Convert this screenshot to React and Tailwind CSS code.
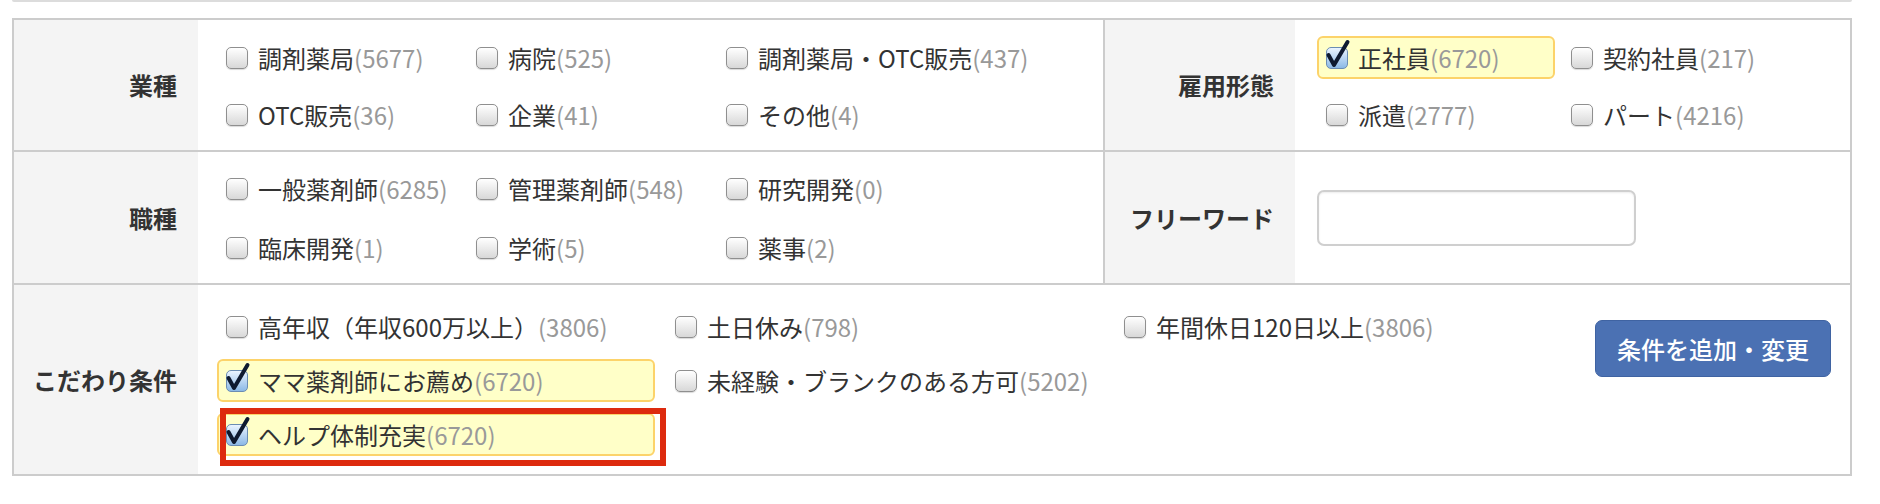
import React from 'react';

const font = { fontFamily: '"Noto Sans CJK JP", "Noto Sans", sans-serif' };

const Box = ({ on }) =>
  on ? (
    <span className="relative w-[22px] h-[22px] shrink-0 rounded-[5px] border border-[#6b8db3] bg-linear-to-b from-[#eaf4ff] to-[#8cb9e6]">
      <svg className="absolute left-[-1px] top-[-9px] overflow-visible" width="26" height="30" viewBox="0 0 26 30">
        <path d="M2.5 16 L8 26 L21.5 3" stroke="#0e1a30" strokeWidth="4" fill="none" strokeLinecap="round" strokeLinejoin="round" />
      </svg>
    </span>
  ) : (
    <span className="w-[22px] h-[22px] shrink-0 rounded-[5px] border border-[#8f8f8f] bg-linear-to-b from-white to-[#d8d8d8] shadow-[0_1px_1px_rgba(0,0,0,0.15)]" />
  );

const Item = ({ label, count, on }) => (
  <label
    className={`flex items-center h-[43px] px-[7px] border-2 rounded-[6px] ${
      on ? 'bg-[#ffffc8] border-[#fcd36a]' : 'border-transparent'
    }`}
  >
    <Box on={on} />
    <span className="ml-[10px] text-[24px] leading-none text-[#333] whitespace-nowrap">
      {label}
      <span className="text-[#999]">({count})</span>
    </span>
  </label>
);

const Head = ({ children, w }) => (
  <div className={`${w} shrink-0 bg-[#f4f4f4] flex items-center justify-end pr-[21px] text-[24px] font-bold text-[#333]`}>
    {children}
  </div>
);

const gyoshu = [
  ['調剤薬局', 5677], ['病院', 525], ['調剤薬局・OTC販売', 437],
  ['OTC販売', 36], ['企業', 41], ['その他', 4],
];
const koyo = [
  ['正社員', 6720, true], ['契約社員', 217], ['派遣', 2777], ['パート', 4216],
];
const shokushu = [
  ['一般薬剤師', 6285], ['管理薬剤師', 548], ['研究開発', 0],
  ['臨床開発', 1], ['学術', 5], ['薬事', 2],
];

export default function App() {
  return (
    <div className="w-[1880px] h-[504px] bg-white" style={font}>
      <div className="ml-[12px] mr-[28px] h-[2px] bg-[#dcdcdc] rounded-b-[3px]" />

      <div className="ml-[12px] mr-[28px] mt-[16px] border-2 border-[#ccc]">
        {/* 業種 / 雇用形態 */}
        <div className="flex border-b-2 border-[#ccc]">
          <div className="flex w-[1091px] border-r-2 border-[#ccc]">
            <Head w="w-[184px]">業種</Head>
            <div className="pl-[19px] pt-[16px] pb-[14px] grid grid-cols-[repeat(3,238px)] gap-x-[12px] gap-y-[14px]">
              {gyoshu.map(([l, c]) => <Item key={l} label={l} count={c} />)}
            </div>
          </div>
          <div className="flex flex-1">
            <Head w="w-[190px]">雇用形態</Head>
            <div className="pl-[22px] pt-[16px] pb-[14px] grid grid-cols-[repeat(2,238px)] gap-x-[7px] gap-y-[14px]">
              {koyo.map(([l, c, on]) => <Item key={l} label={l} count={c} on={on} />)}
            </div>
          </div>
        </div>

        {/* 職種 / フリーワード */}
        <div className="flex border-b-2 border-[#ccc]">
          <div className="flex w-[1091px] border-r-2 border-[#ccc]">
            <Head w="w-[184px]">職種</Head>
            <div className="pl-[19px] pt-[15px] pb-[14px] grid grid-cols-[repeat(3,238px)] gap-x-[12px] gap-y-[16px]">
              {shokushu.map(([l, c]) => <Item key={l} label={l} count={c} />)}
            </div>
          </div>
          <div className="flex flex-1">
            <Head w="w-[190px]">フリーワード</Head>
            <div className="pl-[22px] flex items-center">
              <input
                type="text"
                className="w-[319px] h-[56px] rounded-[7px] border-2 border-[#cfcfcf] bg-white shadow-[inset_0_1px_2px_rgba(0,0,0,0.08)] outline-none"
              />
            </div>
          </div>
        </div>

        {/* こだわり条件 */}
        <div className="flex">
          <Head w="w-[184px]">こだわり条件</Head>
          <div className="flex-1 flex">
            <div className="pl-[19px] pt-[20px] pb-[18px] grid grid-cols-[repeat(3,438px)] gap-x-[11px] gap-y-[11px]">
              <Item label="高年収（年収600万以上）" count={3806} />
              <Item label="土日休み" count={798} />
              <Item label="年間休日120日以上" count={3806} />
              <Item label="ママ薬剤師にお薦め" count={6720} on />
              <Item label="未経験・ブランクのある方可" count={5202} />
              <div />
              <div className="relative">
                <Item label="ヘルプ体制充実" count={6720} on />
                <div className="absolute left-[3px] top-[-5px] w-[446px] h-[58px] border-[6px] border-[#dd2a0e] pointer-events-none" />
              </div>
            </div>
            <div className="ml-auto mr-[19px] pt-[35px]">
              <button className="w-[236px] h-[57px] rounded-[7px] border border-[#3f63a2] bg-[#4b71b3] text-white text-[24px] font-medium">
                条件を追加・変更
              </button>
            </div>
          </div>
        </div>
      </div>
    </div>
  );
}
